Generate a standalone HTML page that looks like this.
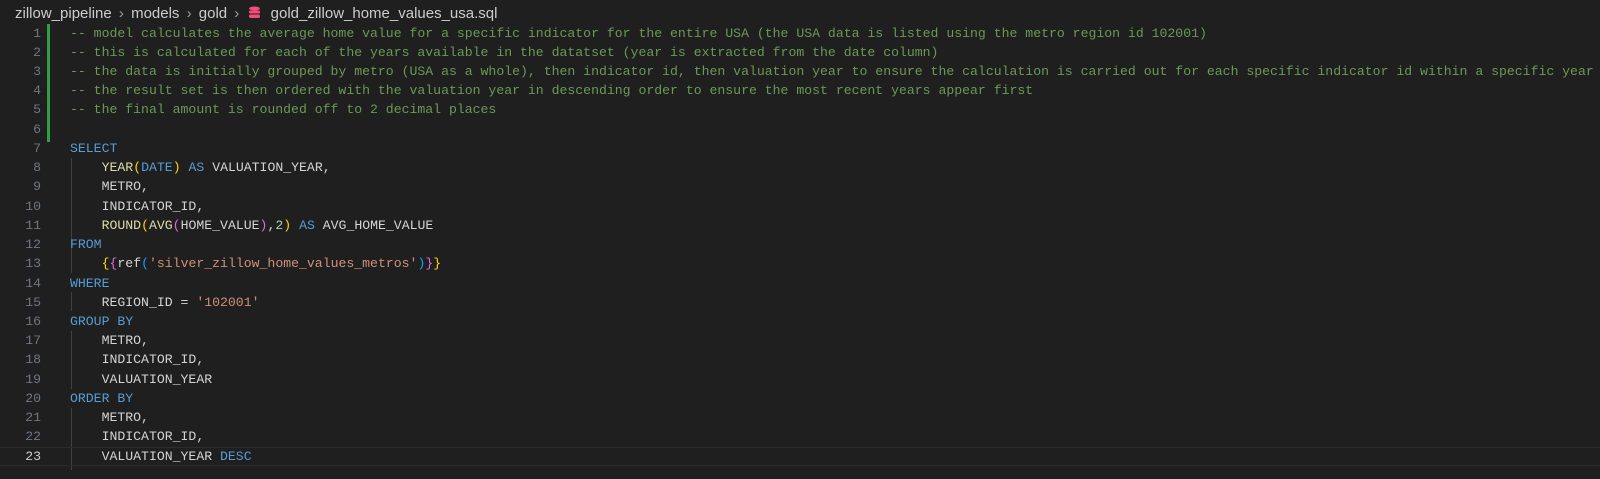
<!DOCTYPE html>
<html><head><meta charset="utf-8"><style>
body{margin:0;background:#1f1f1f;width:1600px;height:479px;overflow:hidden;font-family:"Liberation Mono",monospace;}
.bc{position:absolute;left:15px;top:4px;height:20px;font:15px "Liberation Sans",sans-serif;color:#cccccc;line-height:20px;white-space:pre}
.bc .s{color:#a0a0a0;padding:0 3px}
.l{position:absolute;left:0;width:1600px;height:19px;line-height:19px;font-size:13.17px;white-space:pre;color:#d4d4d4}
.n{position:absolute;left:0;width:41px;text-align:right;color:#6e7681}
.c{position:absolute;left:70px}
.cur .n{color:#cccccc}
.cur{box-shadow:inset 0 1px #2c2c2c,inset 0 -1px #2c2c2c}
.cm{color:#6a9955}.k{color:#569cd6}.f{color:#dcdcaa}.y{color:#ffd700}.p{color:#da70d6}.b{color:#179fff}.s2{color:#ce9178}.nu{color:#b5cea8}
.g{position:absolute;left:47px;top:24px;width:3px;height:118px;background:#2ea043}
.ig{position:absolute;left:71px;width:1px;background:#404040}
</style></head><body>
<div class="bc">zillow_pipeline<span class="s"> › </span>models<span class="s"> › </span>gold<span class="s"> › </span><svg width="13" height="13" viewBox="0 0 13 13" style="vertical-align:-1px;margin:0 5px 0 2px"><ellipse cx="6.5" cy="2.5" rx="5.5" ry="2" fill="#f14c7c"/><rect x="1" y="4.5" width="11" height="3" rx="1" fill="#f14c7c"/><rect x="1" y="8.5" width="11" height="3.5" rx="1.5" fill="#f14c7c"/></svg> gold_zillow_home_values_usa.sql</div>
<div class="g"></div>
<div class="ig" style="top:158px;height:96px"></div>
<div class="ig" style="top:254px;height:19px"></div>
<div class="ig" style="top:292px;height:19px"></div>
<div class="ig" style="top:331px;height:58px"></div>
<div class="ig" style="top:408px;height:62px"></div>
<div class="l" style="top:23.5px"><span class="n">1</span><span class="c cm">-- model calculates the average home value for a specific indicator for the entire USA (the USA data is listed using the metro region id 102001)</span></div>
<div class="l" style="top:42.7px"><span class="n">2</span><span class="c cm">-- this is calculated for each of the years available in the datatset (year is extracted from the date column)</span></div>
<div class="l" style="top:62px"><span class="n">3</span><span class="c cm">-- the data is initially grouped by metro (USA as a whole), then indicator id, then valuation year to ensure the calculation is carried out for each specific indicator id within a specific year</span></div>
<div class="l" style="top:81.2px"><span class="n">4</span><span class="c cm">-- the result set is then ordered with the valuation year in descending order to ensure the most recent years appear first</span></div>
<div class="l" style="top:100.4px"><span class="n">5</span><span class="c cm">-- the final amount is rounded off to 2 decimal places</span></div>
<div class="l" style="top:119.7px"><span class="n">6</span></div>
<div class="l" style="top:138.9px"><span class="n">7</span><span class="c k">SELECT</span></div>
<div class="l" style="top:158.1px"><span class="n">8</span><span class="c">    <span class="f">YEAR</span><span class="y">(</span><span class="k">DATE</span><span class="y">)</span> <span class="k">AS</span> VALUATION_YEAR,</span></div>
<div class="l" style="top:177.3px"><span class="n">9</span><span class="c">    METRO,</span></div>
<div class="l" style="top:196.6px"><span class="n">10</span><span class="c">    INDICATOR_ID,</span></div>
<div class="l" style="top:215.8px"><span class="n">11</span><span class="c">    <span class="f">ROUND</span><span class="y">(</span><span class="f">AVG</span><span class="p">(</span>HOME_VALUE<span class="p">)</span>,<span class="nu">2</span><span class="y">)</span> <span class="k">AS</span> AVG_HOME_VALUE</span></div>
<div class="l" style="top:235px"><span class="n">12</span><span class="c k">FROM</span></div>
<div class="l" style="top:254.3px"><span class="n">13</span><span class="c">    <span class="y">{</span><span class="p">{</span>ref<span class="b">(</span><span class="s2">'silver_zillow_home_values_metros'</span><span class="b">)</span><span class="p">}</span><span class="y">}</span></span></div>
<div class="l" style="top:273.5px"><span class="n">14</span><span class="c k">WHERE</span></div>
<div class="l" style="top:292.7px"><span class="n">15</span><span class="c">    REGION_ID = <span class="s2">'102001'</span></span></div>
<div class="l" style="top:311.9px"><span class="n">16</span><span class="c k">GROUP BY</span></div>
<div class="l" style="top:331.2px"><span class="n">17</span><span class="c">    METRO,</span></div>
<div class="l" style="top:350.4px"><span class="n">18</span><span class="c">    INDICATOR_ID,</span></div>
<div class="l" style="top:369.6px"><span class="n">19</span><span class="c">    VALUATION_YEAR</span></div>
<div class="l" style="top:388.9px"><span class="n">20</span><span class="c k">ORDER BY</span></div>
<div class="l" style="top:408.1px"><span class="n">21</span><span class="c">    METRO,</span></div>
<div class="l" style="top:427.3px"><span class="n">22</span><span class="c">    INDICATOR_ID,</span></div>
<div class="l cur" style="top:446.5px"><span class="n">23</span><span class="c">    VALUATION_YEAR <span class="k">DESC</span></span></div>
</body></html>
